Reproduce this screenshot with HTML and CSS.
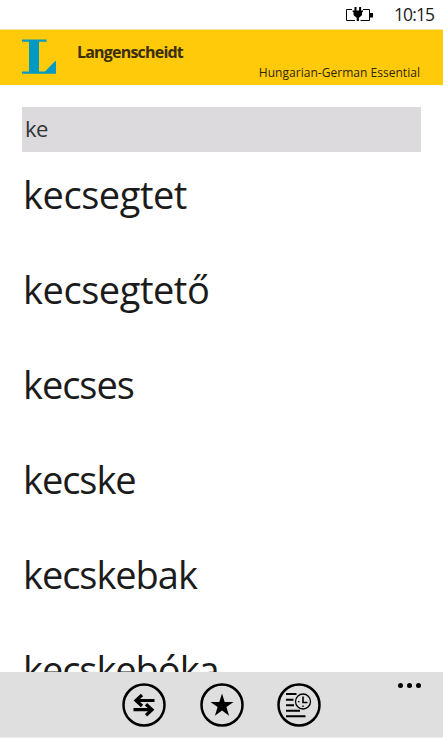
FILE: index.html
```html
<!DOCTYPE html>
<html lang="hu">

<head>
    <meta charset="UTF-8">
    <meta name="viewport" content="width=device-width, initial-scale=1.0">
    <title>Langenscheidt</title>
    <link rel="stylesheet" href="styles.css">
</head>

<body>
    <div class="status-bar">
        <svg class="battery" width="29" height="16" viewBox="0 0 29 16">
            <path d="M7 2.500H1.500v11H10M18 2.500h6.500v11H15.500" fill="none" stroke="#000" stroke-width="1"/>
            <path d="M25 6h3v4.500h-3zM9.500 0h2v3.500h2.600V0h2v3.500h1.900v1.500h-.9V8l-2.700 2.500h-.5V14h-2.200v-3.500h-.5L8.500 8V5h-.9V3.500h1.900z"/>
        </svg>
        <span class="clock">10:15</span>
    </div>
    <header class="header">
        <svg class="logo" width="35" height="36" viewBox="0 0 35 36">
            <path d="M0 0.500h24.500v2.300H17v29.700h6L33.300 22H34v12.800H0v-2.300h7V2.800H0z" fill="#0099c4"/>
        </svg>
        <span class="brand">Langenscheidt</span>
        <span class="edition">Hungarian-German Essential</span>
    </header>
    <main class="content">
        <input class="search" type="text" value="ke">
        <ul class="results">
            <li class="loose">kecsegtet</li>
            <li class="loose">kecsegtető</li>
            <li>kecses</li>
            <li>kecske</li>
            <li>kecskebak</li>
            <li>kecskebóka</li>
        </ul>
    </main>
    <footer class="app-bar">
        <div class="actions">
            <!-- swap languages -->
            <svg width="44" height="44" viewBox="0 0 44 44">
                <circle cx="22" cy="22" r="20.500" fill="none" stroke="#000" stroke-width="2.500"/>
                <path d="M32.500 17.500H14M20 12l-6 5.500 6 5.500M11.500 26.700H30M24 21.200l6 5.500-6 5.500" fill="none" stroke="#000" stroke-width="3.200"/>
            </svg>
            <!-- favourites -->
            <svg width="44" height="44" viewBox="0 0 44 44">
                <circle cx="22" cy="22" r="20.500" fill="none" stroke="#000" stroke-width="2.500"/>
                <path d="M22 10.500l2.700 8.400h8.800l-7.100 5.200 2.700 8.700-7.100-5.400-7.100 5.400 2.700-8.700-7.100-5.200h8.800z"/>
            </svg>
            <!-- history -->
            <svg width="44" height="44" viewBox="0 0 44 44">
                <circle cx="22" cy="22" r="20.500" fill="none" stroke="#000" stroke-width="2.500"/>
                <path d="M9 11h10.500M9 16.800h7.500M9 22.300h8M9 27.700h14M9 33.200h19.500" fill="none" stroke="#000" stroke-width="1.900"/>
                <circle cx="26" cy="18.500" r="7.500" fill="none" stroke="#000" stroke-width="1.300"/>
                <path d="M26 13.500v6h4.500" fill="none" stroke="#000" stroke-width="1.600"/>
                <path d="M21 18h1.500v1.300H21zM25.300 22.500h1.400v1.500h-1.400z"/>
            </svg>
        </div>
        <div class="more"><i></i><i></i><i></i></div>
    </footer>
</body>

</html>
```
FILE: styles.css
```css
* {
    box-sizing: border-box;
}

body {
    display: flex;
    flex-direction: column;
    height: 738px;
    margin: 0;
    overflow: hidden;
    font-family: "Noto Sans", "Open Sans", sans-serif;
    color: #1b1b1b;
    background-color: #fff;
}

.status-bar {
    display: flex;
    flex: none;
    justify-content: flex-end;
    height: 29px;
    padding: 7px 10px 0 0;
}

.clock {
    width: 39px;
    margin-left: 20px;
    font-family: "Open Sans", sans-serif;
    font-size: 17.5px;
    line-height: 15px;
    letter-spacing: -0.9px;
    white-space: nowrap;
}

.header {
    display: flex;
    flex: none;
    height: 56px;
    padding: 0 23px 0 22px;
    border-top: 1px solid #fbe596;
    background-color: #ffca0a;
}

.logo {
    margin-top: 9px;
}

.brand {
    margin: 12px 0 0 20px;
    font-family: "Open Sans", sans-serif;
    font-size: 16px;
    font-weight: bold;
    line-height: 20px;
    letter-spacing: -0.8px;
    color: #3a2e0c;
}

.edition {
    margin: 35px 0 0 auto;
    font-family: "Open Sans", sans-serif;
    font-size: 12px;
    line-height: 16px;
    letter-spacing: 0.03px;
    white-space: nowrap;
    color: #2e2608;
}

.content {
    flex: 1;
    min-height: 0;
    padding: 22px 22px 0;
    overflow: hidden;
}

.search {
    display: block;
    width: 399px;
    height: 45px;
    padding: 0 3px 4px;
    border: none;
    border-radius: 0;
    font-family: "Open Sans", sans-serif;
    font-size: 22px;
    letter-spacing: -0.5px;
    color: #333;
    background-color: #dcdadd;
}

.results {
    margin: 0;
    padding: 0;
    list-style-type: none;
    font-family: "Open Sans", sans-serif;
}

.results li {
    height: 95px;
    padding: 16px 0 0 1px;
    font-size: 38px;
    line-height: 52px;
    letter-spacing: -1.05px;
}

.results .loose {
    letter-spacing: -0.45px;
}

.app-bar {
    display: flex;
    flex: none;
    justify-content: space-between;
    height: 66px;
    padding: 11px 22px 0 122px;
    border-bottom: 1px solid #eee;
    background-color: #dfdfdf;
}

.actions {
    display: flex;
    gap: 33.5px;
}

.more {
    display: flex;
    gap: 4px;
}

.more i {
    width: 5px;
    height: 5px;
    border-radius: 50%;
    background-color: #000;
}
```
